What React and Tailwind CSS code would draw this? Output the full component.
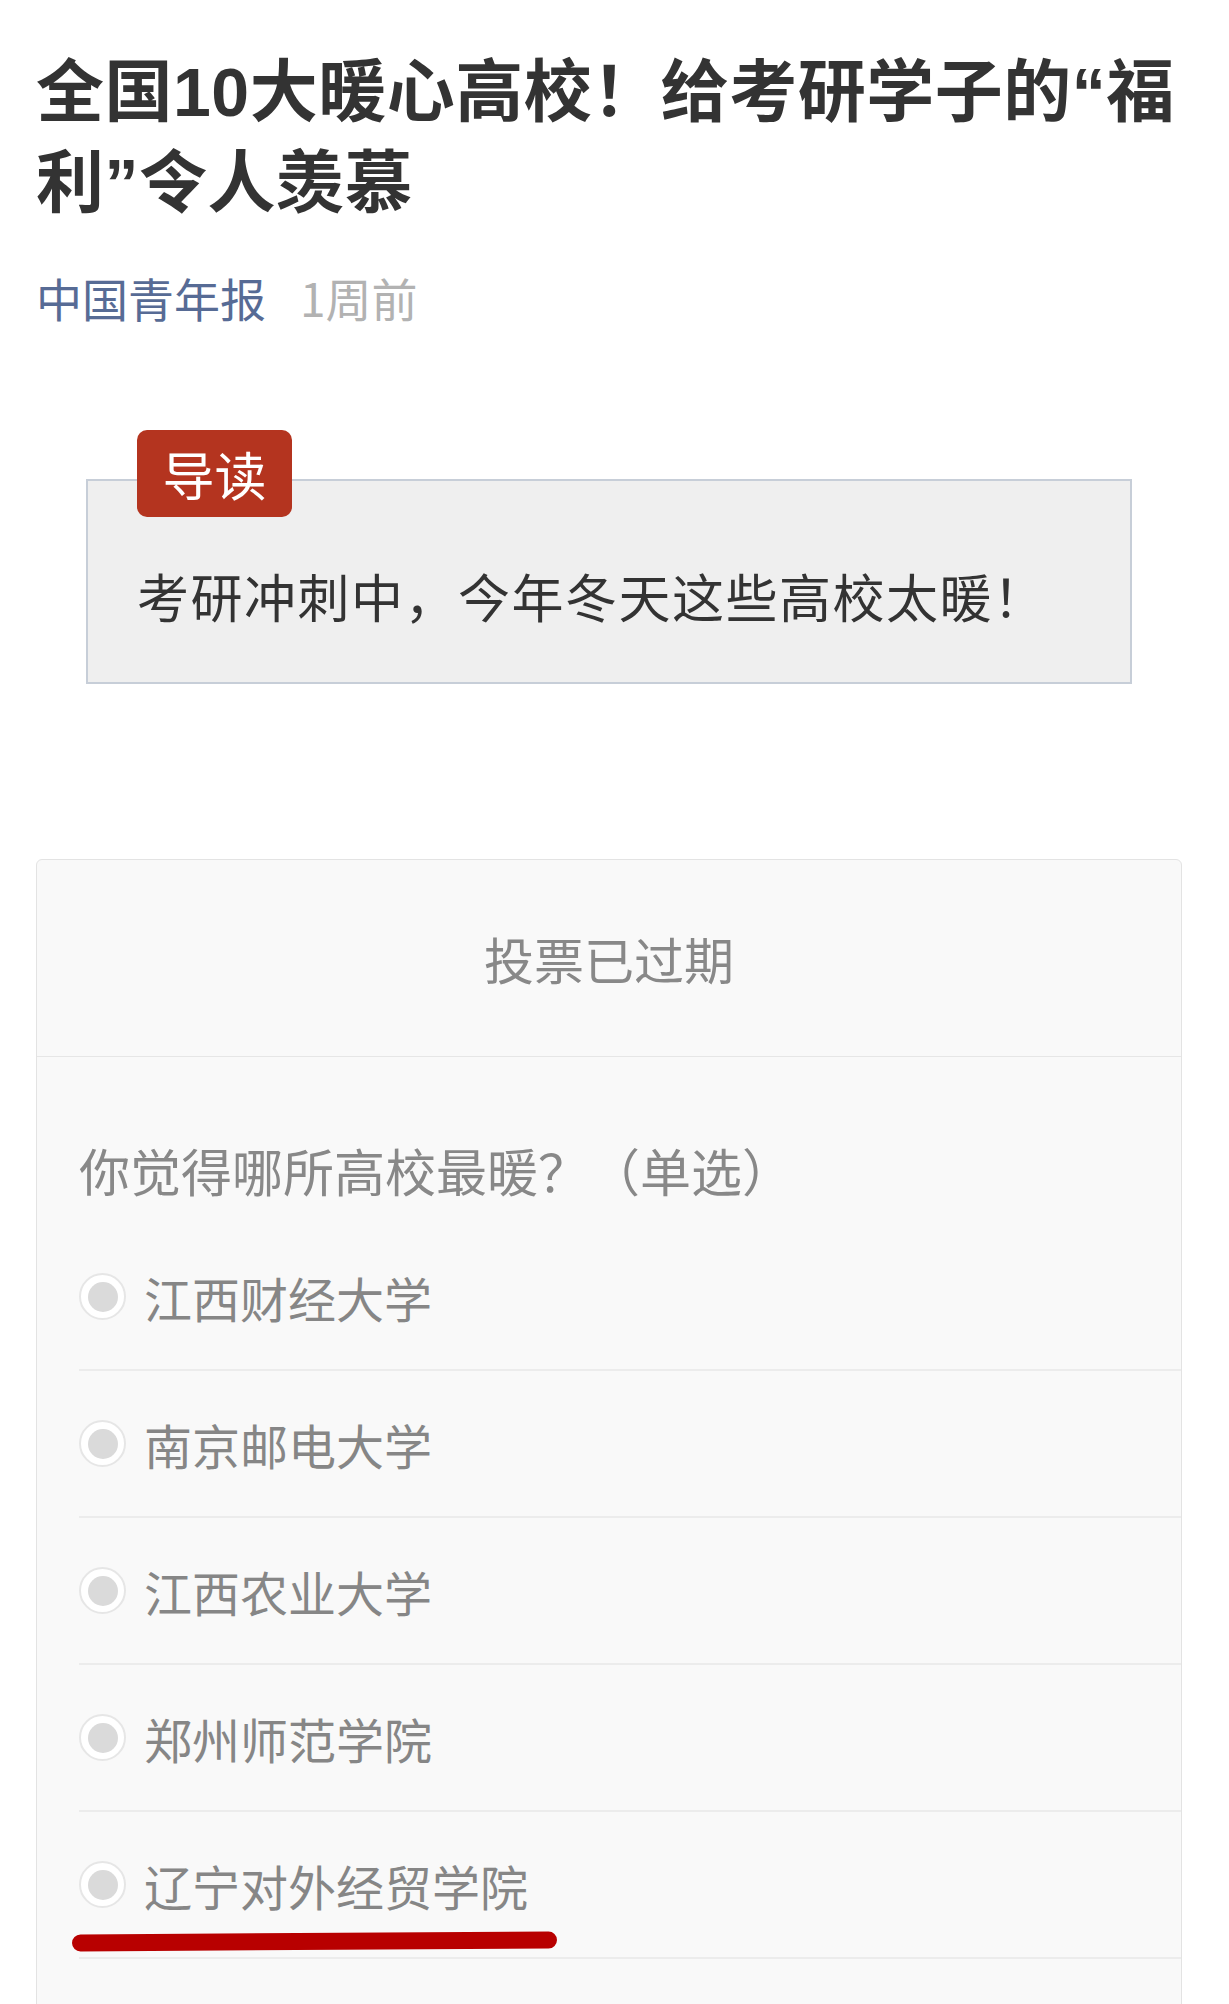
import React from 'react';

const options = ['江西财经大学', '南京邮电大学', '江西农业大学', '郑州师范学院', '辽宁对外经贸学院'];

const Radio = () => (
  <span className="flex h-[47px] w-[47px] shrink-0 items-center justify-center rounded-full border-2 border-[#e6e6e6] bg-white">
    <span className="h-[30px] w-[30px] rounded-full bg-[#dadada]" />
  </span>
);

const App = () => {
  return (
    <div className="h-screen overflow-hidden bg-white pl-[36px] pt-[47px] font-['Noto_Sans_CJK_SC',sans-serif]">
      <h1 className="w-[1160px] font-['Liberation_Sans','Noto_Sans_CJK_SC',sans-serif] text-[68px] font-bold leading-[91px] tracking-[0.5px] text-[#333333]">
        全国10大暖心高校！给考研学子的“福利”令人羡慕
      </h1>

      <div className="mt-[38px] flex text-[46px] leading-[60px]">
        <span className="text-[#576b95]">中国青年报</span>
        <span className="ml-[34px] text-[#b2b2b2]">1周前</span>
      </div>

      <div className="relative ml-[50px] mt-[152px] w-[1046px] border-2 border-[#c7ced8] bg-[#efefef] pb-[51px] pl-[49px] pt-[80px]">
        <div className="absolute -top-[51px] left-[49px] flex h-[87px] w-[155px] items-center justify-center rounded-[10px] bg-[#b4341f] text-[52px] leading-none text-white">
          导读
        </div>
        <p className="text-[52px] leading-[70px] tracking-[1.5px] text-[#333333]">考研冲刺中，今年冬天这些高校太暖！</p>
      </div>

      <div className="mt-[175px] w-[1146px] rounded-[6px] border border-[#e3e3e3] bg-[#f9f9f9]">
        <div className="flex h-[197px] items-center justify-center border-b border-[#e6e6e6] text-[50px] text-[#888888]">
          投票已过期
        </div>
        <div className="pl-[42px] pb-[80px]">
          <p className="pt-[88px] text-[51px] leading-[50px] text-[#888888]">你觉得哪所高校最暖？（单选）</p>
          <ul className="mt-[29px]">
            {options.map((name, i) => (
              <li
                key={name}
                className="relative flex h-[147px] items-center border-b-2 border-[#ececec]"
              >
                <Radio />
                <span className="ml-[18px] text-[48px] text-[#868686]">{name}</span>
                {i === options.length - 1 && (
                  <span className="absolute -left-[7px] top-[121px] h-[17px] w-[485px] -rotate-[0.35deg] rounded-full bg-[#b80000]" />
                )}
              </li>
            ))}
          </ul>
        </div>
      </div>
    </div>
  );
};

export default App;
